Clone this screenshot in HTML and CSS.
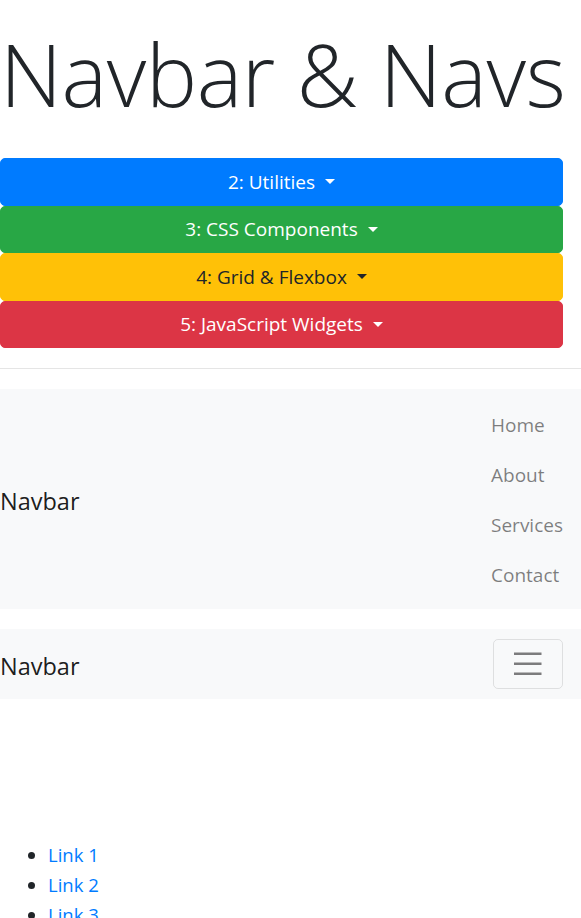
FILE: index.html
```html
<!DOCTYPE html>
<html lang="en">
<head>
<meta charset="utf-8">
<title>Navbar &amp; Navs</title>
<link rel="stylesheet" href="styles.css">
</head>
<body>
<h1 class="display-title">Navbar &amp; Navs</h1>
<div class="btn-stack">
  <button class="btn btn-primary">2: Utilities<span class="caret"></span></button>
  <button class="btn btn-success">3: CSS Components<span class="caret"></span></button>
  <button class="btn btn-warning">4: Grid &amp; Flexbox<span class="caret"></span></button>
  <button class="btn btn-danger">5: JavaScript Widgets<span class="caret"></span></button>
</div>
<hr class="divider">
<nav class="navbar">
  <a class="brand" href="#">Navbar</a>
  <ul class="nav-list">
    <li><a class="nav-link" href="#">Home</a></li>
    <li><a class="nav-link" href="#">About</a></li>
    <li><a class="nav-link" href="#">Services</a></li>
    <li><a class="nav-link" href="#">Contact</a></li>
  </ul>
</nav>
<nav class="navbar">
  <a class="brand" href="#">Navbar</a>
  <button class="toggler" aria-label="Toggle navigation">
    <svg class="toggler-icon" viewBox="0 0 30 30" width="37.5" height="37.5">
      <path d="M4 7h22M4 15h22M4 23h22" stroke="rgba(0,0,0,0.5)" stroke-width="2" stroke-linecap="butt" fill="none"/>
    </svg>
  </button>
</nav>
<ul class="link-list">
  <li><a href="#">Link 1</a></li>
  <li><a href="#">Link 2</a></li>
  <li><a href="#">Link 3</a></li>
</ul>
</body>
</html>
```
FILE: styles.css
```css
html, body {
  margin: 0;
  padding: 0;
  background: #fff;
}
body {
  font-family: "Open Sans", "Noto Sans", sans-serif;
  font-size: 20px;
  line-height: 1.5;
  color: #212529;
}
.display-title {
  font-size: 86px;
  font-weight: 300;
  line-height: 108px;
  margin: 20px 0 30px 0;
  letter-spacing: -0.4px;
  white-space: nowrap;
}
.btn-stack {
  display: flex;
  flex-direction: column;
  width: 563px;
}
.btn {
  display: flex;
  justify-content: center;
  align-items: center;
  font-family: inherit;
  font-size: 19px;
  line-height: 30px;
  padding: 7.5px 0;
  height: 47.5px;
  border: 1.25px solid transparent;
  border-radius: 5px;
  color: #fff;
  cursor: pointer;
}
.btn-primary { background: #007bff; border-color: #007bff; }
.btn-success { background: #28a745; border-color: #28a745; }
.btn-warning { background: #ffc107; border-color: #ffc107; color: #212529; }
.btn-danger  { background: #dc3545; border-color: #dc3545; }
.caret {
  display: inline-block;
  margin-left: 10px;
  width: 0;
  height: 0;
  border-top: 5px solid currentColor;
  border-left: 5px solid transparent;
  border-right: 5px solid transparent;
}
.divider {
  margin: 20px 0;
  border: 0;
  border-top: 1px solid rgba(0,0,0,0.1);
  height: 0;
}
.navbar {
  display: flex;
  align-items: center;
  justify-content: space-between;
  background: #f8f9fa;
  padding: 10px 18px 10px 0;
  margin-bottom: 20px;
}
.brand {
  font-size: 23.5px;
  line-height: 37.5px;
  padding: 9px 0 3.5px 0;
  color: rgba(0,0,0,0.9);
  text-decoration: none;
}
.nav-list {
  list-style: none;
  margin: 0;
  padding: 0;
  display: flex;
  flex-direction: column;
}
.nav-link {
  display: block;
  font-size: 19px;
  line-height: 30px;
  padding: 11px 0 9px 0;
  color: rgba(0,0,0,0.5);
  text-decoration: none;
}
.toggler {
  width: 70px;
  height: 50px;
  padding: 5px 15px;
  display: flex;
  align-items: center;
  justify-content: center;
  background: transparent;
  border: 1.25px solid rgba(0,0,0,0.1);
  border-radius: 5px;
}
.toggler-icon { display: block; }
.link-list {
  margin: 141px 0 20px 0;
  padding-left: 48px;
}
.link-list li {
  line-height: 30px;
  font-size: 18.5px;
}
.link-list a {
  color: #007bff;
  text-decoration: none;
}
```
